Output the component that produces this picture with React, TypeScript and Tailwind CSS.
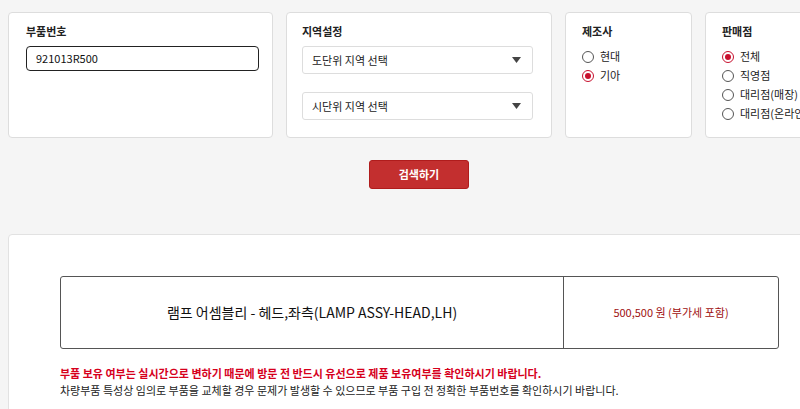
import { useState } from "react";

const font = { fontFamily: '"Noto Sans CJK KR", "Noto Sans", sans-serif' };

const makers = ["현대", "기아"];
const shops = ["전체", "직영점", "대리점(매장)", "대리점(온라인몰)"];

function Radio({ label, checked, onClick }: { label: string; checked: boolean; onClick: () => void }) {
  return (
    <label className="flex h-[19px] items-center gap-[6px] text-[11px] text-[#222]" onClick={onClick}>
      <span
        className={`flex h-[12px] w-[12px] items-center justify-center rounded-full border ${
          checked ? "border-[#c8102e]" : "border-[#555]"
        } bg-white`}
      >
        {checked && <span className="h-[6px] w-[6px] rounded-full bg-[#c8102e]" />}
      </span>
      <span className="whitespace-nowrap">{label}</span>
    </label>
  );
}

function Select({ text }: { text: string }) {
  return (
    <div className="flex h-[28px] w-[231px] items-center justify-between rounded-[3px] border border-[#ddd] bg-white pl-[9px] pr-[11px] text-[11px] text-[#222]">
      <span>{text}</span>
      <svg width="9" height="6" viewBox="0 0 9 6">
        <path d="M0 0h9L4.5 6z" fill="#444" />
      </svg>
    </div>
  );
}

export default function App() {
  const [maker, setMaker] = useState("기아");
  const [shop, setShop] = useState("전체");

  return (
    <div style={font} className="h-[409px] w-[800px] overflow-hidden bg-[#f5f5f5]">
      <div className="flex gap-[13px] pl-[8px] pt-[12px]">
        <div className="h-[126px] w-[265px] shrink-0 rounded-[4px] border border-[#ddd] bg-white pl-[17px] pt-[10px]">
          <p className="text-[11px] font-bold leading-[16px] text-[#222]">부품번호</p>
          <div className="mt-[7px] flex h-[25px] w-[233px] items-center rounded-[4px] border border-[#222] pl-[9px] text-[11px] text-[#111]">
            921013R500
          </div>
        </div>

        <div className="h-[126px] w-[266px] shrink-0 rounded-[4px] border border-[#ddd] bg-white pl-[15px] pt-[10px]">
          <p className="text-[11px] font-bold leading-[16px] text-[#222]">지역설정</p>
          <div className="mt-[7px] flex flex-col gap-[18px]">
            <Select text="도단위 지역 선택" />
            <Select text="시단위 지역 선택" />
          </div>
        </div>

        <div className="h-[126px] w-[127px] shrink-0 rounded-[4px] border border-[#ddd] bg-white pl-[16px] pt-[10px]">
          <p className="text-[11px] font-bold leading-[16px] text-[#222]">제조사</p>
          <div className="mt-[8px] flex flex-col">
            {makers.map((m) => (
              <Radio key={m} label={m} checked={maker === m} onClick={() => setMaker(m)} />
            ))}
          </div>
        </div>

        <div className="h-[126px] w-[130px] shrink-0 rounded-[4px] border border-[#ddd] bg-white pl-[16px] pt-[10px]">
          <p className="text-[11px] font-bold leading-[16px] text-[#222]">판매점</p>
          <div className="mt-[8px] flex flex-col">
            {shops.map((s) => (
              <Radio key={s} label={s} checked={shop === s} onClick={() => setShop(s)} />
            ))}
          </div>
        </div>
      </div>

      <button className="ml-[369px] mt-[22px] flex h-[29px] w-[100px] items-center justify-center rounded-[3px] border border-[#b01c1c] bg-[#c32f2f] text-[11px] font-bold text-white">
        검색하기
      </button>

      <div className="ml-[8px] mt-[45px] h-[200px] w-[800px] rounded-[4px] border border-[#e2e2e2] bg-white pl-[51px] pt-[41px]">
        <div className="flex h-[73px] w-[719px] rounded-[3px] border border-[#555]">
          <div className="flex w-[503px] items-center justify-center border-r border-[#555] text-[14px] text-[#111]">
            램프 어셈블리 - 헤드,좌측(LAMP ASSY-HEAD,LH)
          </div>
          <div className="flex flex-1 items-center justify-center text-[11px] text-[#a01010]">
            500,500 원 (부가세 포함)
          </div>
        </div>
        <p className="mt-[16px] text-[11px] font-bold leading-[17px] text-[#d6001c]">
          부품 보유 여부는 실시간으로 변하기 때문에 방문 전 반드시 유선으로 제품 보유여부를 확인하시기 바랍니다.
        </p>
        <p className="text-[11px] leading-[17px] text-[#222]">
          차량부품 특성상 임의로 부품을 교체할 경우 문제가 발생할 수 있으므로 부품 구입 전 정확한 부품번호를 확인하시기 바랍니다.
        </p>
      </div>
    </div>
  );
}
